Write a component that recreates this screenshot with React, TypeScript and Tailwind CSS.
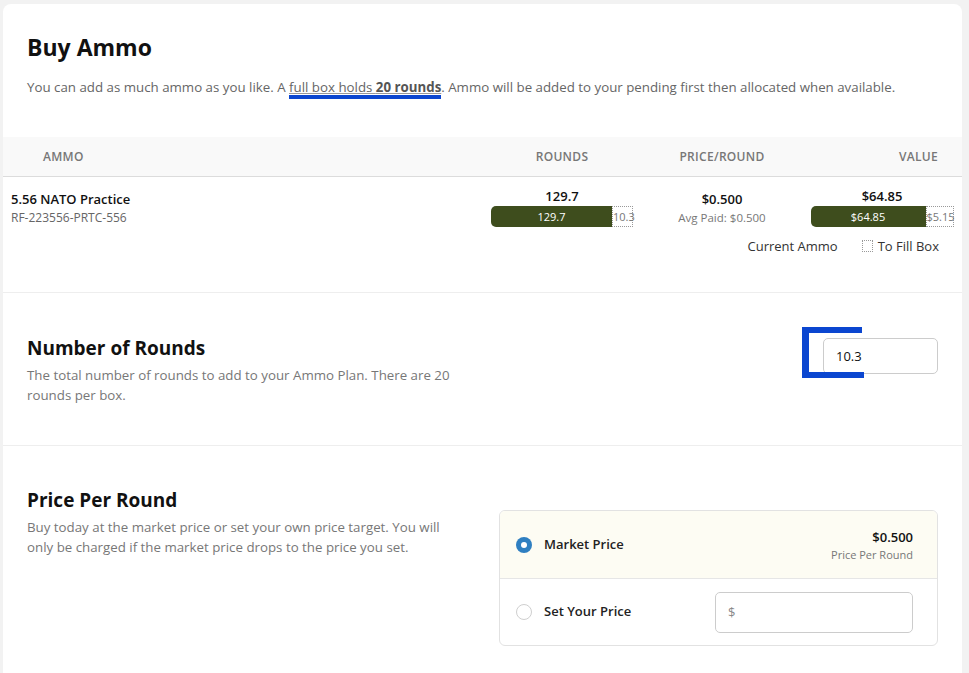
import React from "react";

function Bar({ filled, rest, fillW, restW }: { filled: string; rest: string; fillW: string; restW: string }) {
  return (
    <div className="flex h-[21px] text-[11px] leading-[21px]">
      <div className={`${fillW} bg-[#3e4d1d] text-white text-center rounded-l-[5px]`}>{filled}</div>
      <div className={`${restW} border border-dotted border-[#999] text-[#777] text-center leading-[19px]`}>{rest}</div>
    </div>
  );
}

function Radio({ checked }: { checked?: boolean }) {
  return checked ? (
    <span className="w-4 h-4 rounded-full bg-[#2f7fc1] flex items-center justify-center shrink-0">
      <span className="w-[6px] h-[6px] rounded-full bg-white" />
    </span>
  ) : (
    <span className="w-4 h-4 rounded-full border border-[#cfcfcf] bg-white shrink-0" />
  );
}

export default function App() {
  return (
    <div className="min-h-screen bg-[#f2f2f2] pl-[3px] pt-[4px] pr-[7px] font-['Open_Sans',sans-serif] text-[#222]">
      <div className="bg-white rounded-t-lg h-[669px] overflow-hidden">

        {/* Header */}
        <div className="px-6 pt-[27px] pb-[40px]">
          <h1 className="text-[23px] leading-8 font-bold text-[#111]">Buy Ammo</h1>
          <p className="mt-[14px] text-[13.3px] leading-5 text-[#666]">
            You can add as much ammo as you like. A{" "}
            <span className="relative underline decoration-[#999]">
              full box holds <b className="text-[#555]">20 rounds</b>
              <span className="absolute left-0 right-0 -bottom-[3px] h-[4px] bg-[#0b46d0]" />
            </span>
            . Ammo will be added to your pending first then allocated when available.
          </p>
        </div>

        {/* Table */}
        <div className="grid grid-cols-[1fr_160px_160px_160px] h-10 items-center bg-[#f9f9f9] border-b border-[#dcdcdc] text-[12px] font-semibold tracking-wide text-[#777]">
          <div className="pl-10">AMMO</div>
          <div className="text-center">ROUNDS</div>
          <div className="text-center">PRICE/ROUND</div>
          <div className="text-right pr-6">VALUE</div>
        </div>

        <div className="pb-[36px] border-b border-[#eeeeee]">
          <div className="grid grid-cols-[1fr_160px_160px_160px] pt-[9px]">
            <div className="pl-2 pt-[3px]">
              <div className="text-[13px] leading-5 font-semibold text-[#111]">5.56 NATO Practice</div>
              <div className="text-[12px] leading-[18px] text-[#666]">RF-223556-PRTC-556</div>
            </div>
            <div className="flex flex-col items-center">
              <div className="text-[13px] leading-5 font-semibold text-[#111]">129.7</div>
              <Bar filled="129.7" rest="10.3" fillW="w-[121px]" restW="w-[21px]" />
            </div>
            <div className="flex flex-col items-center pt-[3px]">
              <div className="text-[13px] leading-5 font-semibold text-[#111]">$0.500</div>
              <div className="text-[11.5px] leading-[18px] text-[#777]">Avg Paid: $0.500</div>
            </div>
            <div className="flex flex-col items-center">
              <div className="text-[13px] leading-5 font-semibold text-[#111]">$64.85</div>
              <Bar filled="$64.85" rest="$5.15" fillW="w-[115px]" restW="w-[28px]" />
            </div>
          </div>
          <div className="flex justify-end items-center pr-[23px] mt-[9px] text-[13px] leading-5 text-[#333]">
            <span>Current Ammo</span>
            <span className="ml-6 w-[11px] h-[12px] border border-dotted border-[#999]" />
            <span className="ml-[5px]">To Fill Box</span>
          </div>
        </div>

        {/* Number of rounds */}
        <div className="flex justify-between items-start px-6 pt-[41px] pb-[40px] border-b border-[#eeeeee]">
          <div className="w-[440px]">
            <h2 className="text-[19px] leading-7 font-bold text-[#111]">Number of Rounds</h2>
            <p className="mt-[3px] text-[13.3px] leading-5 text-[#777]">
              The total number of rounds to add to your Ammo Plan. There are 20 rounds per box.
            </p>
          </div>
          <div className="relative mt-[4px]">
            <input
              defaultValue="10.3"
              className="w-[115px] h-9 border border-[#cccccc] rounded-[5px] px-3 text-[13px] text-[#111] outline-none"
            />
            <span className="absolute -left-[21px] -top-[11px] w-[7px] h-[51px] bg-[#0b46d0]" />
            <span className="absolute -left-[21px] -top-[11px] w-[60px] h-[6px] bg-[#0b46d0]" />
            <span className="absolute -left-[21px] top-[34px] w-[62px] h-[6px] bg-[#0b46d0]" />
          </div>
        </div>

        {/* Price per round */}
        <div className="flex justify-between items-start px-6 pt-[40px]">
          <div className="w-[420px]">
            <h2 className="text-[19px] leading-7 font-bold text-[#111]">Price Per Round</h2>
            <p className="mt-[3px] text-[13.3px] leading-5 text-[#777]">
              Buy today at the market price or set your own price target. You will only be charged if the market price drops to the price you set.
            </p>
          </div>
          <div className="mt-[24px] w-[439px] border border-[#e2e2e2] rounded-md overflow-hidden">
            <div className="h-[68px] bg-[#fdfcf3] border-b border-[#e6e6e6] flex items-center pl-4 pr-6">
              <Radio checked />
              <span className="ml-3 text-[13px] font-semibold text-[#222]">Market Price</span>
              <div className="ml-auto text-right">
                <div className="text-[13px] leading-5 font-semibold text-[#111]">$0.500</div>
                <div className="text-[11px] leading-4 text-[#777]">Price Per Round</div>
              </div>
            </div>
            <div className="h-[66px] flex items-center pl-4 pr-6">
              <Radio />
              <span className="ml-3 text-[13px] font-semibold text-[#222]">Set Your Price</span>
              <input
                placeholder="$"
                className="ml-auto w-[198px] h-[41px] border border-[#cccccc] rounded-[5px] px-3 text-[13px] outline-none placeholder:text-[#888]"
              />
            </div>
          </div>
        </div>

      </div>
    </div>
  );
}
